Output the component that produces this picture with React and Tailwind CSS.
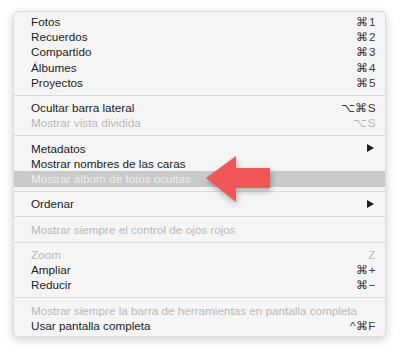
import React from 'react';

const groups = [
  [
    { label: 'Fotos', key: '⌘1' },
    { label: 'Recuerdos', key: '⌘2' },
    { label: 'Compartido', key: '⌘3' },
    { label: 'Álbumes', key: '⌘4' },
    { label: 'Proyectos', key: '⌘5' },
  ],
  [
    { label: 'Ocultar barra lateral', key: '⌥⌘S' },
    { label: 'Mostrar vista dividida', key: '⌥S', disabled: true },
  ],
  [
    { label: 'Metadatos', submenu: true },
    { label: 'Mostrar nombres de las caras' },
    { label: 'Mostrar álbum de fotos ocultas', highlighted: true },
  ],
  [{ label: 'Ordenar', submenu: true }],
  [{ label: 'Mostrar siempre el control de ojos rojos', disabled: true }],
  [
    { label: 'Zoom', key: 'Z', disabled: true },
    { label: 'Ampliar', key: '⌘+' },
    { label: 'Reducir', key: '⌘−' },
  ],
  [
    { label: 'Mostrar siempre la barra de herramientas en pantalla completa', disabled: true },
    { label: 'Usar pantalla completa', key: '^⌘F' },
  ],
];

const MenuRow = ({ item }) => {
  let rowClass = 'text-[#1c1c1c]';
  if (item.disabled) rowClass = 'text-[#b8b8b8]';
  if (item.highlighted) rowClass = 'bg-[#c9c9c9] text-[#ededed]';

  return (
    <div className={`flex h-[15.25px] items-center justify-between pl-[17px] pr-[9px] ${rowClass}`}>
      <span className="whitespace-nowrap">{item.label}</span>
      {item.key && (
        <span className={`whitespace-nowrap tracking-[0.5px] ${item.disabled ? 'text-[#b8b8b8]' : 'text-[#3a3a3a]'}`}>
          {item.key}
        </span>
      )}
      {item.submenu && (
        <svg width="7" height="8" viewBox="0 0 7 8" className="mr-[2px]">
          <polygon points="0,0 7,4 0,8" fill="#1c1c1c" />
        </svg>
      )}
    </div>
  );
};

export default function App() {
  return (
    <div className="relative h-[353px] w-[400px] bg-white font-['Liberation_Sans',sans-serif] text-[11.7px]">
      <div className="pl-[13px] pt-[11px]">
        {/* Menu panel */}
        <div className="w-[373px] rounded-[5px] border border-[#dcdcdc] bg-[#f5f5f5] pb-[3px] pt-[2px] shadow-[0_3px_10px_rgba(0,0,0,0.2)]">
          {groups.map((group, gi) => (
            <div key={gi}>
              {gi > 0 && (
                <div className="flex h-[10px] items-center">
                  <div className="h-px w-full bg-[#dadada]" />
                </div>
              )}
              {group.map((item) => (
                <MenuRow key={item.label} item={item} />
              ))}
            </div>
          ))}
        </div>
      </div>

      {/* Red pointer arrow */}
      <svg
        className="absolute left-0 top-0 drop-shadow-[1px_3px_3px_rgba(0,0,0,0.3)]"
        width="400"
        height="353"
        viewBox="0 0 400 353"
      >
        <polygon
          points="206,178 236,156 236,168 270,168 270,188 236,188 236,202"
          fill="#f25757"
        />
      </svg>
    </div>
  );
}
